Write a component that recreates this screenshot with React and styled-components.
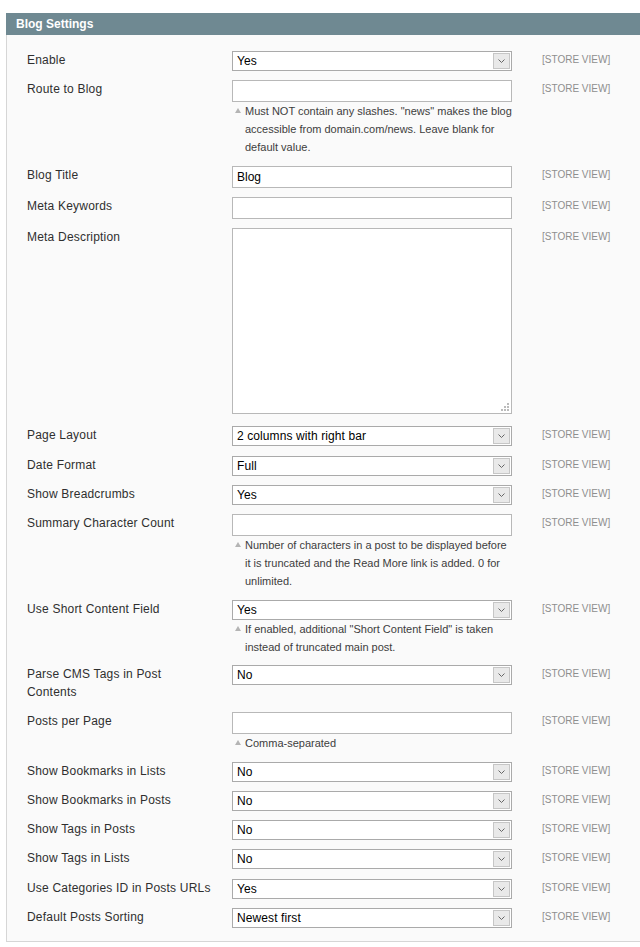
import React from 'react'
import styled, { createGlobalStyle } from 'styled-components'

const GlobalStyle = createGlobalStyle`
  html, body {
    margin: 0;
    padding: 0;
    overflow: hidden;
    background: #fff;
  }
  body {
    font-family: 'Liberation Sans', Arial, sans-serif;
    font-size: 12px;
    color: #2f2f2f;
  }
`

const rows = [
  { label: 'Enable', type: 'select', value: 'Yes' },
  {
    label: 'Route to Blog',
    type: 'text',
    value: '',
    hint: 'Must NOT contain any slashes. "news" makes the blog accessible from domain.com/news. Leave blank for default value.'
  },
  { label: 'Blog Title', type: 'text', value: 'Blog' },
  { label: 'Meta Keywords', type: 'text', value: '' },
  { label: 'Meta Description', type: 'textarea', value: '' },
  { label: 'Page Layout', type: 'select', value: '2 columns with right bar' },
  { label: 'Date Format', type: 'select', value: 'Full' },
  { label: 'Show Breadcrumbs', type: 'select', value: 'Yes' },
  {
    label: 'Summary Character Count',
    type: 'text',
    value: '',
    hint: 'Number of characters in a post to be displayed before it is truncated and the Read More link is added. 0 for unlimited.'
  },
  {
    label: 'Use Short Content Field',
    type: 'select',
    value: 'Yes',
    hint: 'If enabled, additional "Short Content Field" is taken instead of truncated main post.'
  },
  { label: 'Parse CMS Tags in Post Contents', type: 'select', value: 'No', multi: true },
  { label: 'Posts per Page', type: 'text', value: '', hint: 'Comma-separated' },
  { label: 'Show Bookmarks in Lists', type: 'select', value: 'No' },
  { label: 'Show Bookmarks in Posts', type: 'select', value: 'No' },
  { label: 'Show Tags in Posts', type: 'select', value: 'No' },
  { label: 'Show Tags in Lists', type: 'select', value: 'No' },
  { label: 'Use Categories ID in Posts URLs', type: 'select', value: 'Yes' },
  { label: 'Default Posts Sorting', type: 'select', value: 'Newest first' }
]

const Page = styled.div`
  padding: 13px 0 0 6px;
`

const Section = styled.section`
  width: 660px;
`

const Header = styled.div`
  height: 22px;
  line-height: 22px;
  background: #6f8992;
  color: #fff;
  font-weight: bold;
  font-size: 12px;
  padding-left: 10px;
`

const Body = styled.div`
  background: #fafafa;
  border-left: 1px solid #d6d6d6;
  border-bottom: 1px solid #d6d6d6;
  padding: 11px 0 9px 20px;
`

const Row = styled.div`
  display: grid;
  grid-template-columns: 205px 280px 1fr;
  padding: 5px 0 4.3px;
`

const Label = styled.div`
  line-height: 18px;
  padding-right: 19px;
  padding-bottom: ${p => (p.$multi ? '2px' : '0')};
  letter-spacing: 0.2px;
  color: #2f2f2f;
`

const Scope = styled.div`
  font-size: 10px;
  line-height: 18px;
  color: #8e8e8e;
  padding-left: 30px;
`

const SelectBox = styled.div`
  display: flex;
  align-items: center;
  height: 20px;
  box-sizing: border-box;
  border: 1px solid #aaa;
  background: #fff;
  color: #000;
  font-size: 12px;
`

const SelectValue = styled.span`
  flex: 1;
  padding-left: 4px;
  line-height: 18px;
  letter-spacing: 0.1px;
`

const Arrow = styled.span`
  display: flex;
  align-items: center;
  justify-content: center;
  width: 17px;
  height: 16px;
  margin-right: 1px;
  box-sizing: border-box;
  border: 1px solid #c6c6c6;
  background: #e9e9e9;
`

const TextInput = styled.div`
  height: 22px;
  box-sizing: border-box;
  border: 1px solid #b8b8b8;
  background: #fff;
  color: #000;
  padding-left: 4px;
  line-height: 20px;
  font-size: 12px;
`

const TextArea = styled.div`
  position: relative;
  height: 186px;
  box-sizing: border-box;
  border: 1px solid #b8b8b8;
  background: #fff;
  margin-bottom: 3px;
`

const Grip = styled.svg`
  position: absolute;
  right: 2px;
  bottom: 2px;
`

const Hint = styled.div`
  display: flex;
  font-size: 11px;
  line-height: 18px;
  color: #3d3d3d;
`

const HintMark = styled.span`
  flex: none;
  width: 0;
  height: 0;
  margin: 6px 4px 0 3px;
  border-left: 3px solid transparent;
  border-right: 3px solid transparent;
  border-bottom: 5px solid #b4b4b4;
`

const HintText = styled.span`
  flex: 1;
`

function Chevron () {
  return (
    <svg width='7' height='4' viewBox='0 0 7 4'>
      <path d='M0.5 0.5 L3.5 3.5 L6.5 0.5' fill='none' stroke='#666' strokeWidth='1' />
    </svg>
  )
}

function Field ({ row }) {
  if (row.type === 'select') {
    return (
      <SelectBox>
        <SelectValue>{row.value}</SelectValue>
        <Arrow><Chevron /></Arrow>
      </SelectBox>
    )
  }
  if (row.type === 'textarea') {
    return (
      <TextArea>
        <Grip width='8' height='8' viewBox='0 0 8 8'>
          <rect x='6' y='0' width='2' height='2' fill='#bbb' />
          <rect x='3' y='3' width='2' height='2' fill='#bbb' />
          <rect x='6' y='3' width='2' height='2' fill='#bbb' />
          <rect x='0' y='6' width='2' height='2' fill='#bbb' />
          <rect x='3' y='6' width='2' height='2' fill='#bbb' />
          <rect x='6' y='6' width='2' height='2' fill='#bbb' />
        </Grip>
      </TextArea>
    )
  }
  return <TextInput>{row.value}</TextInput>
}

export default function App () {
  return (
    <Page>
      <GlobalStyle />
      <Section>
        <Header>Blog Settings</Header>
        <Body>
          {rows.map(row => (
            <Row key={row.label}>
              <Label $multi={row.multi}>{row.label}</Label>
              <div>
                <Field row={row} />
                {row.hint && (
                  <Hint>
                    <HintMark />
                    <HintText>{row.hint}</HintText>
                  </Hint>
                )}
              </div>
              <Scope>[STORE VIEW]</Scope>
            </Row>
          ))}
        </Body>
      </Section>
    </Page>
  )
}
